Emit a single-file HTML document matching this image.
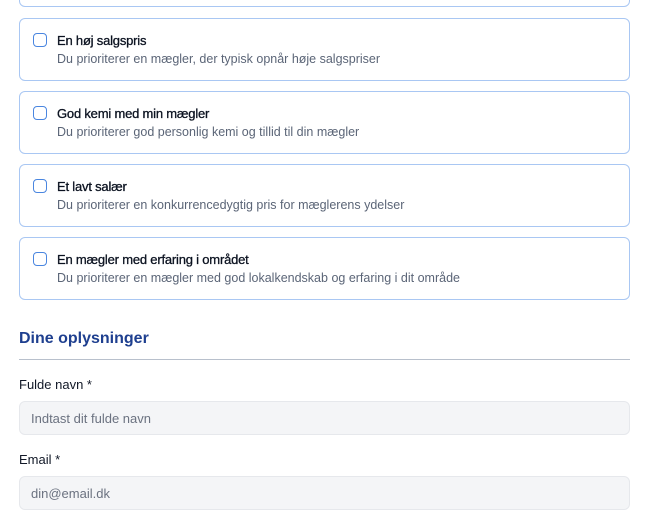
<!DOCTYPE html>
<html><head><style>
*{box-sizing:border-box;margin:0;padding:0}
body{width:650px;height:500px;overflow:hidden;background:#fff;font-family:"Liberation Sans",sans-serif;position:relative}
.card{position:absolute;left:19px;width:611px;height:63px;border:1px solid #a9c7f3;border-radius:6px;background:#fff}
.cb{position:absolute;left:13px;top:14px;width:14px;height:14px;border:1.5px solid #4a86e0;border-radius:4px}
.t{position:absolute;left:37px;top:14px;font-size:13px;color:#0b1220;letter-spacing:-0.2px;-webkit-text-stroke:0.3px #0b1220}
.s{position:absolute;left:37px;top:33px;font-size:12.5px;color:#5b6577}
h2{position:absolute;left:19px;top:330px;font-size:16px;color:#1e3f8f;font-weight:bold}
.line{position:absolute;left:19px;top:359px;width:611px;height:1px;background:#b8c0cc}
.lbl{position:absolute;left:19px;font-size:13px;color:#111827}
.inp{position:absolute;left:19px;width:611px;height:34px;background:#f4f5f7;border:1px solid #e6e8ec;border-radius:6px;font-size:13px;color:#6b7280;padding:9px 0 0 11px}
</style></head><body>
<div class="card" style="top:-56px"></div>
<div class="card" style="top:18px"><div class="cb"></div><div class="t">En høj salgspris</div><div class="s">Du prioriterer en mægler, der typisk opnår høje salgspriser</div></div>
<div class="card" style="top:91px"><div class="cb"></div><div class="t">God kemi med min mægler</div><div class="s">Du prioriterer god personlig kemi og tillid til din mægler</div></div>
<div class="card" style="top:164px"><div class="cb"></div><div class="t">Et lavt salær</div><div class="s">Du prioriterer en konkurrencedygtig pris for mæglerens ydelser</div></div>
<div class="card" style="top:237px"><div class="cb"></div><div class="t">En mægler med erfaring i området</div><div class="s">Du prioriterer en mægler med god lokalkendskab og erfaring i dit område</div></div>
<h2>Dine oplysninger</h2>
<div class="line"></div>
<div class="lbl" style="top:377px">Fulde navn *</div>
<div class="inp" style="top:401px">Indtast dit fulde navn</div>
<div class="lbl" style="top:452px">Email *</div>
<div class="inp" style="top:476px">din@email.dk</div>
</body></html>
